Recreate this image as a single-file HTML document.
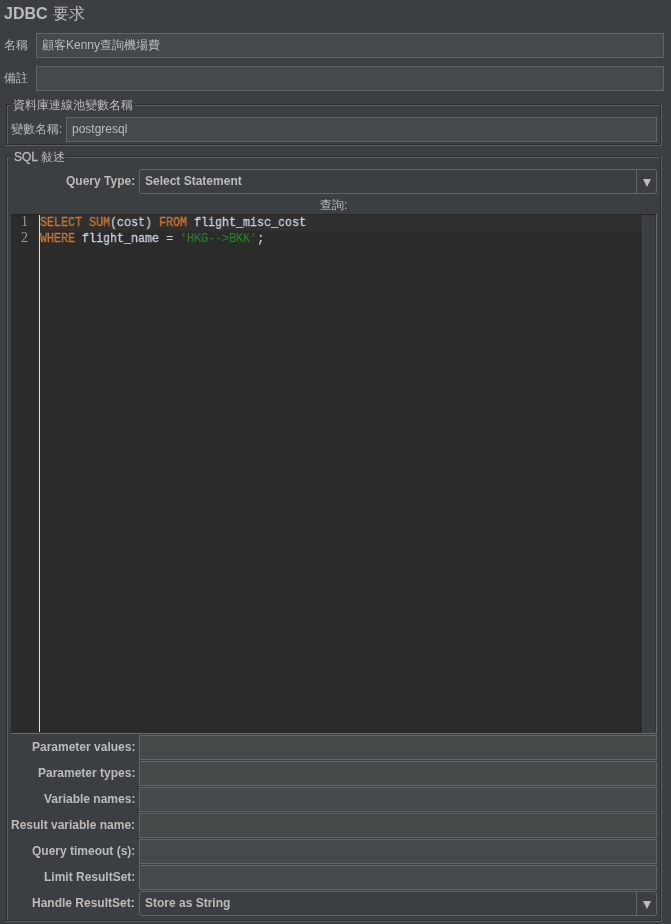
<!DOCTYPE html>
<html><head><meta charset="utf-8">
<style>
html,body{margin:0;padding:0;}
body{width:671px;height:924px;overflow:hidden;background:#3c3f41;position:relative;font-family:"Liberation Sans",sans-serif;color:#bbbbbb;font-size:12px;}
.a{position:absolute;}
.t{position:absolute;will-change:transform;white-space:nowrap;line-height:14px;}
.fld{position:absolute;box-sizing:border-box;background:#45494a;border:1px solid #5f6466;}
.cmb{position:absolute;box-sizing:border-box;background:#3c3f41;border:1px solid #5f6466;border-radius:3px;}
.cmb .sep{position:absolute;top:0;bottom:0;right:19px;width:1px;background:#5f6466;}
.cmb .arr{position:absolute;right:5px;top:9px;width:0;height:0;border-left:4px solid transparent;border-right:4px solid transparent;border-top:8px solid #bbbbbb;}
.dk{position:absolute;background:#2b2d2f;}
.lt{position:absolute;background:#5b5e60;}
.b{font-weight:bold;}
.lbl{position:absolute;will-change:transform;right:536px;white-space:nowrap;font-weight:bold;line-height:14px;}
.code{position:absolute;will-change:transform;font-family:"Liberation Mono",monospace;font-size:13px;line-height:16px;white-space:pre;-webkit-text-stroke:0.3px;transform:scaleX(0.8974);transform-origin:0 0;}
</style></head><body>
<div class="t b" style="left:4px;top:5px;font-size:16px;line-height:18px;">JDBC <span style="font-weight:normal;margin-left:1px;">要求</span></div>

<div class="t" style="left:4px;top:38px;">名稱</div>
<div class="fld" style="left:36px;top:33px;width:628px;height:25px;"></div>
<div class="t" style="left:42px;top:38px;">顧客Kenny查詢機場費</div>

<div class="t" style="left:4px;top:71px;">備註</div>
<div class="fld" style="left:36px;top:66px;width:628px;height:25px;"></div>

<!-- fieldset 1 -->
<div class="dk" style="left:6px;top:104px;width:655px;height:1px;"></div>
<div class="dk" style="left:6px;top:104px;width:1px;height:41px;"></div>
<div class="dk" style="left:660px;top:104px;width:1px;height:41px;"></div>
<div class="dk" style="left:6px;top:144px;width:655px;height:1px;"></div>
<div class="lt" style="left:7px;top:105px;width:653px;height:1px;"></div>
<div class="lt" style="left:7px;top:105px;width:1px;height:39px;"></div>
<div class="lt" style="left:661px;top:104px;width:1px;height:42px;"></div>
<div class="lt" style="left:6px;top:145px;width:656px;height:1px;"></div>
<div class="a" style="left:11px;top:96px;width:123px;height:14px;background:#3c3f41;"></div>
<div class="t" style="left:13px;top:98px;">資料庫連線池變數名稱</div>

<div class="t" style="left:11px;top:122px;">變數名稱:</div>
<div class="fld" style="left:66px;top:117px;width:591px;height:25px;"></div>
<div class="t" style="left:72px;top:122px;">postgresql</div>

<!-- fieldset 2 -->
<div class="dk" style="left:6px;top:156px;width:655px;height:1px;"></div>
<div class="dk" style="left:6px;top:156px;width:1px;height:765px;"></div>
<div class="dk" style="left:660px;top:156px;width:1px;height:765px;"></div>
<div class="dk" style="left:6px;top:920px;width:655px;height:1px;"></div>
<div class="lt" style="left:7px;top:157px;width:653px;height:1px;"></div>
<div class="lt" style="left:7px;top:157px;width:1px;height:763px;"></div>
<div class="lt" style="left:661px;top:156px;width:1px;height:766px;"></div>
<div class="lt" style="left:6px;top:921px;width:656px;height:1px;"></div>
<div class="a" style="left:11px;top:148px;width:54px;height:14px;background:#3c3f41;"></div>
<div class="t" style="left:14px;top:150px;"><span style="-webkit-text-stroke:0.3px">SQL</span> 敍述</div>

<div class="lbl" style="top:174px;">Query Type:</div>
<div class="cmb" style="left:139px;top:169px;width:518px;height:25px;"><div class="sep"></div><div class="arr"></div></div>
<div class="t b" style="left:145px;top:174px;">Select Statement</div>

<div class="t" style="left:320px;top:198px;">查詢:</div>

<!-- editor -->
<div class="a" style="left:11px;top:214px;width:646px;height:520px;background:#2b2b2b;"></div>
<div class="a" style="left:11px;top:214px;width:646px;height:1px;background:#252627;"></div>
<div class="a" style="left:40px;top:215px;width:602px;height:16px;background:#313030;"></div>
<div class="a" style="left:642px;top:215px;width:14px;height:518px;background:#3c3f41;"></div>
<div class="a" style="left:642px;top:215px;width:1px;height:518px;background:#424547;"></div>
<div class="a" style="left:655px;top:215px;width:1px;height:518px;background:#323436;"></div>
<div class="a" style="left:656px;top:214px;width:1px;height:520px;background:#6a6d6f;"></div>
<div class="a" style="left:11px;top:733px;width:646px;height:1px;background:#6a6d6f;"></div>
<div class="a" style="left:39px;top:215px;width:1px;height:517px;background:#e0e0e0;"></div>
<div class="t" style="left:21px;top:214px;color:#999999;font-family:'Liberation Serif',serif;font-size:14px;line-height:16px;">1<br>2</div>
<div class="code" style="left:40px;top:215px;color:#c8d0dc;"><span style="color:#cc7832">SELECT</span> <span style="color:#cc7832">SUM</span>(cost) <span style="color:#cc7832">FROM</span> flight_misc_cost
<span style="color:#cc7832">WHERE</span> flight_name = <span style="color:#268c26;-webkit-text-stroke:0">'HKG--&gt;BKK'</span>;</div>

<!-- params -->
<div class="lbl" style="top:740px;">Parameter values:</div>
<div class="fld" style="left:139px;top:735px;width:518px;height:25px;"></div>
<div class="lbl" style="top:766px;">Parameter types:</div>
<div class="fld" style="left:139px;top:761px;width:518px;height:25px;"></div>
<div class="lbl" style="top:792px;">Variable names:</div>
<div class="fld" style="left:139px;top:787px;width:518px;height:25px;"></div>
<div class="lbl" style="top:818px;">Result variable name:</div>
<div class="fld" style="left:139px;top:813px;width:518px;height:25px;"></div>
<div class="lbl" style="top:844px;">Query timeout (s):</div>
<div class="fld" style="left:139px;top:839px;width:518px;height:25px;"></div>
<div class="lbl" style="top:870px;">Limit ResultSet:</div>
<div class="fld" style="left:139px;top:865px;width:518px;height:25px;"></div>
<div class="lbl" style="top:896px;">Handle ResultSet:</div>
<div class="cmb" style="left:139px;top:891px;width:518px;height:25px;"><div class="sep"></div><div class="arr"></div></div>
<div class="t b" style="left:145px;top:896px;">Store as String</div>
</body></html>
